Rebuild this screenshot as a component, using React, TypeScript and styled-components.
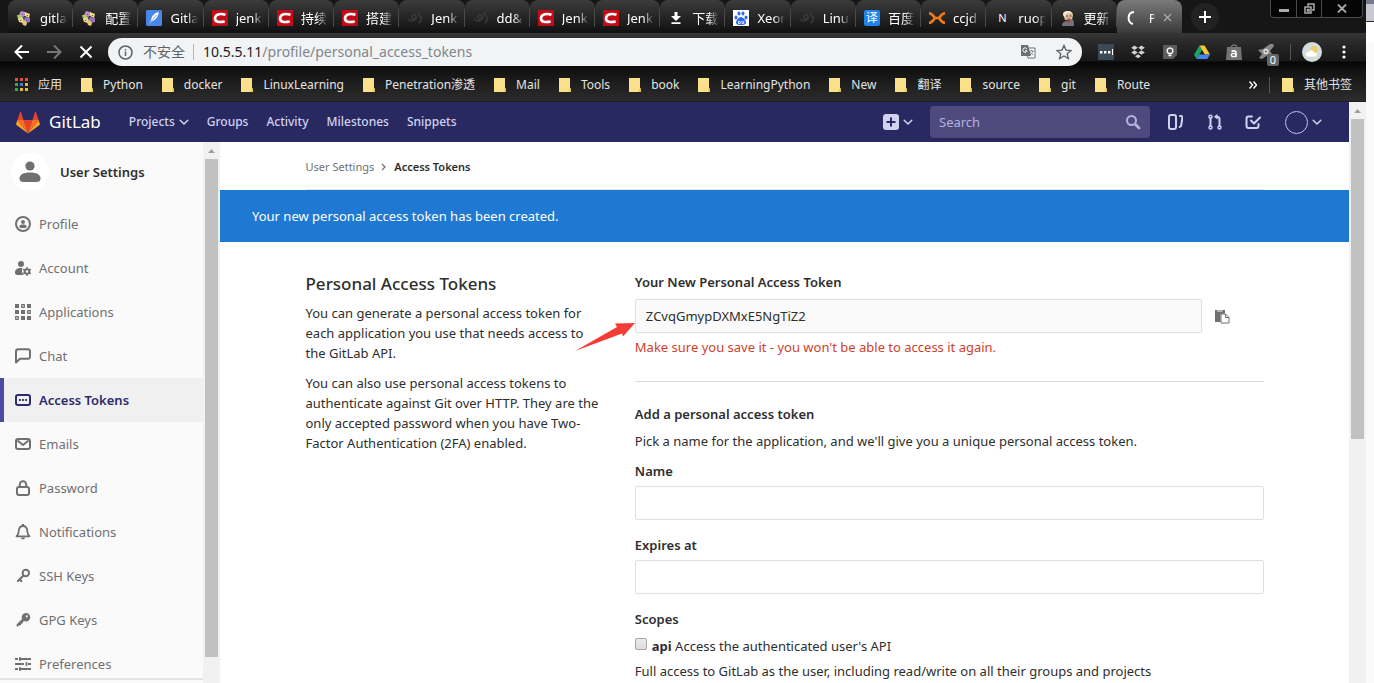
import React from "react";
import styled, { createGlobalStyle, css } from "styled-components";

const uiFont = `"Noto Sans", "Noto Sans CJK SC", sans-serif`;

const GlobalStyle = createGlobalStyle`
  *, *::before, *::after { box-sizing: border-box; }
  body { margin: 0; font-family: ${uiFont}; font-size: 13px; line-height: 20px; color: #2e2e2e; background: #fff; }
  h1, h2, h3, p, ul { margin: 0; padding: 0; }
  a { color: inherit; text-decoration: none; }
  button { border: 0; padding: 0; background: none; color: inherit; font: inherit; cursor: pointer; }
  input { font: inherit; color: inherit; }
  svg { display: block; flex: none; }
`;

/* ---------- desktop ---------- */

const Desktop = styled.div`
  display: flex;
  height: 100vh;
  overflow: hidden;
`;

const BrowserWindow = styled.div`
  flex: 1;
  min-width: 0;
  display: flex;
  flex-direction: column;
`;

const NeighbourWindow = styled.div`
  flex: none;
  width: 8px;
  background: linear-gradient(#77798a 0 4px, #c9c9d2 4px 21px, #2b2b30 21px 22px, #fff 22px 42px, #f9f9fa 42px);
`;

/* ---------- tab strip ---------- */

const TabBar = styled.div`
  display: flex;
  height: 33px;
  padding-left: 8px;
  background: #161616;
  color: #fff;
`;

const TabList = styled.div`
  flex: 1;
  min-width: 0;
  max-width: 1174px;
  display: grid;
  grid-auto-flow: column;
  grid-auto-columns: minmax(0, 1fr);
`;

const Tab = styled.button<{ $active?: boolean }>`
  position: relative;
  min-width: 0;
  display: flex;
  align-items: center;
  gap: 8px;
  padding: 2px ${(p) => (p.$active ? 10 : 6)}px 0 8px;
  font-size: 13px;
  border-radius: 8px 8px 0 0;
  background: ${(p) => (p.$active ? "linear-gradient(#7a7a7a, #3a3a3a)" : "linear-gradient(#3c3c3c, #101010)")};
  &::after {
    content: "";
    position: absolute;
    right: 0;
    top: 9px;
    width: 1px;
    height: 18px;
    background: ${(p) => (p.$active ? "transparent" : "#4a4a4a")};
  }
`;

const TabTitle = styled.span`
  flex: 1;
  min-width: 0;
  text-align: left;
  white-space: nowrap;
  mask-image: linear-gradient(90deg, #000 60%, transparent);
`;

const NewTab = styled.button`
  width: 28px;
  height: 28px;
  margin: 3px 0 0 9px;
  display: grid;
  place-items: center;
  border-radius: 14px;
  background: #222;
`;

const WindowControls = styled.div`
  display: flex;
  align-self: flex-start;
  margin: 0 3px 0 auto;
  height: 18px;
  border: 1px solid #4b4b4b;
  border-top: 0;
  border-radius: 0 0 4px 4px;
  background: #050505;
`;

const WindowButton = styled.button<{ $wide?: boolean }>`
  width: ${(p) => (p.$wide ? 41 : 25)}px;
  display: grid;
  place-items: center;
  & + & { border-left: 1px solid #4b4b4b; }
`;

/* ---------- toolbar ---------- */

const Toolbar = styled.div`
  display: flex;
  align-items: center;
  height: 37px;
  padding: 0 16px 0 14px;
  color: #fff;
  background: linear-gradient(#363636 0, #262626 12px, #181818 28px, #060606 29px, #121212);
`;

const ToolButton = styled.button<{ $dim?: boolean }>`
  width: 16px;
  height: 16px;
  margin-right: 16px;
  display: grid;
  place-items: center;
  color: ${(p) => (p.$dim ? "#777" : "#fff")};
`;

const Omnibox = styled.form`
  flex: 1;
  min-width: 0;
  display: flex;
  align-items: center;
  height: 28px;
  margin: 1px 16px 0 -2px;
  padding: 0 10px;
  border-radius: 14px;
  background: #f1f3f4;
  color: #5f6368;
  font-size: 14px;
`;

const Security = styled.span`
  margin: 0 9px 0 10px;
  padding-right: 8px;
  border-right: 1px solid #b5b7ba;
  line-height: 16px;
  white-space: nowrap;
`;

const Host = styled.label`
  color: #202124;
`;

const PathInput = styled.input`
  flex: 1;
  min-width: 0;
  padding: 0;
  border: 0;
  outline: 0;
  background: none;
  color: #80868b;
`;

const OmniboxActions = styled.div`
  display: flex;
  align-items: center;
  gap: 20px;
`;

const Extensions = styled.div`
  display: flex;
  align-items: center;
  gap: 16px;
`;

const Plain = styled.button`
  display: grid;
  place-items: center;
`;

const Badged = styled(Plain)`
  position: relative;
`;

const Badge = styled.span`
  position: absolute;
  left: 9px;
  top: 10px;
  width: 12px;
  height: 12px;
  border-radius: 2px;
  background: #666;
  font-size: 11px;
  line-height: 12px;
  text-align: center;
`;

const Divider = styled.span`
  width: 1px;
  height: 16px;
  background: #555;
`;

const AccountGroup = styled.div`
  display: flex;
  align-items: center;
  gap: 11px;
`;

/* ---------- bookmarks ---------- */

const BookmarkBar = styled.nav`
  display: flex;
  align-items: center;
  gap: 19px;
  height: 32px;
  padding: 0 14px 2px 15px;
  background: linear-gradient(#121212, #2c2c2c);
  border-bottom: 1px solid #1c1c26;
  color: #e3e3e3;
  font-size: 12px;
  white-space: nowrap;
`;

const Bookmark = styled.a`
  display: flex;
  align-items: center;
  gap: 10px;
`;

const BookmarkEnd = styled.div`
  display: flex;
  align-items: center;
  gap: 12px;
  margin-left: auto;
`;

/* ---------- GitLab header ---------- */

const Viewport = styled.div`
  flex: 1;
  min-height: 0;
  display: flex;
`;

const Page = styled.div`
  flex: 1;
  min-width: 0;
  display: flex;
  flex-direction: column;
`;

const Navbar = styled.header`
  flex: none;
  display: flex;
  align-items: center;
  height: 40px;
  padding: 0 27px 0 16px;
  background: #292961;
  color: #d1d1f0;
`;

const Brand = styled.a`
  display: flex;
  align-items: center;
  gap: 9px;
  margin-right: 28px;
  color: #fff;
  font-size: 17px;
`;

const NavLinks = styled.nav`
  display: flex;
  align-items: center;
  gap: 18px;
  font-size: 12px;
  font-weight: 500;
`;

const NavLink = styled.a`
  display: flex;
  align-items: center;
  gap: 4px;
`;

const NavRight = styled.div`
  display: flex;
  align-items: center;
  margin-left: auto;
`;

const NavButton = styled.button<{ $gap: number }>`
  display: flex;
  align-items: center;
  gap: 4px;
  margin-left: ${(p) => p.$gap}px;
`;

const SearchBox = styled.form`
  display: flex;
  align-items: center;
  width: 220px;
  height: 32px;
  margin-left: 17px;
  padding: 0 9px;
  border-radius: 4px;
  background: #4e4a7e;
  color: #b5b2dc;
`;

const SearchInput = styled.input`
  flex: 1;
  min-width: 0;
  padding: 0;
  border: 0;
  outline: 0;
  background: none;
  &::placeholder { color: #b5b2dc; opacity: 1; }
`;

const Avatar = styled.span`
  width: 23px;
  height: 23px;
  border: 1px solid #c3c2ea;
  border-radius: 50%;
`;

/* ---------- body ---------- */

const Body = styled.div`
  flex: 1;
  min-height: 0;
  display: flex;
`;

const Sidebar = styled.aside`
  flex: none;
  width: 203px;
  display: flex;
  flex-direction: column;
  background: #fafafa;
`;

const SidebarScroll = styled.div`
  flex: 1;
  min-height: 0;
  overflow: hidden;
`;

const SidebarFooter = styled.div`
  flex: none;
  height: 5px;
  border-top: 2px solid #e5e5e5;
`;

const ContextHeader = styled.a`
  display: flex;
  align-items: center;
  gap: 11px;
  height: 60px;
  padding-left: 11px;
  font-weight: 600;
`;

const ContextAvatar = styled.span`
  display: grid;
  place-items: center;
  width: 38px;
  height: 38px;
  border-radius: 50%;
  background: #fff;
  color: #707070;
`;

const SideLink = styled.a<{ $active?: boolean }>`
  display: flex;
  align-items: center;
  gap: 8px;
  height: 44px;
  padding-left: 15px;
  color: #707070;
  ${(p) =>
    p.$active &&
    css`
      background: #f0f0f0;
      box-shadow: inset 4px 0 0 #4b4ba3;
      color: #2f2a6b;
      font-weight: 600;
    `}
`;

const Track = styled.div`
  flex: none;
  display: flex;
  flex-direction: column;
  align-items: center;
  width: 17px;
  background: #f1f1f1;
`;

const TrackArrow = styled.svg`
  width: 17px;
  height: 17px;
  fill: #a0a0a0;
`;

const Thumb = styled.div<{ $size: string }>`
  width: 13px;
  height: ${(p) => p.$size};
  background: #c1c1c1;
`;

const Main = styled.main`
  flex: 1;
  min-width: 0;
  overflow: hidden;
`;

const Container = styled.div`
  max-width: 990px;
  margin: 0 auto;
  padding: 0 16px;
`;

const Breadcrumbs = styled.nav`
  display: flex;
  align-items: center;
  gap: 7px;
  height: 48px;
  padding-top: 2px;
  border-bottom: 1px solid #e5e5e5;
  font-size: 11px;
  color: #707070;
`;

const Current = styled.a`
  margin-left: 1px;
  font-weight: 600;
  color: #2e2e2e;
`;

const Flash = styled.div`
  padding: 16px 32px;
  background: #1f78d1;
  color: #fff;
`;

const Settings = styled.div`
  display: grid;
  grid-template-columns: 1fr 2fr;
  margin: 0 -15px;
  padding-top: 30px;
`;

const Column = styled.section`
  position: relative;
  padding: 0 15px;
`;

const PageTitle = styled.h1`
  margin-bottom: 7px;
  font-size: 17px;
  line-height: 24px;
  font-weight: 500;
`;

const Paragraph = styled.p`
  margin-bottom: 10px;
`;

const Heading = styled.h2`
  margin-bottom: 7px;
  font-size: 13px;
  line-height: 20px;
  font-weight: 600;
`;

const Label = styled.label`
  display: block;
  margin-bottom: 5px;
  font-weight: 600;
`;

const TokenLabel = styled(Label)`
  margin-bottom: 7px;
`;

const TextInput = styled.input`
  display: block;
  width: 100%;
  height: 34px;
  padding: 6px 10px;
  border: 1px solid #dfdfdf;
  border-radius: 2px;
  outline: 0;
  background: #fff;
  &:read-only { background: #fafafa; }
`;

const Field = styled.div`
  margin-bottom: 15px;
`;

const TokenRow = styled.div`
  display: flex;
  align-items: center;
`;

const CopyButton = styled.button`
  flex: none;
  width: 40px;
  height: 34px;
  margin-right: 22px;
  display: grid;
  place-items: center;
  color: #707070;
`;

const Warning = styled.p`
  margin-top: 4px;
  color: #cf3f2c;
`;

const Rule = styled.hr`
  height: 1px;
  margin: 24px 0 22px;
  border: 0;
  background: #dcdcdc;
`;

const CheckRow = styled.label`
  display: flex;
  align-items: center;
  gap: 5px;
  margin: 7px 0 5px;
`;

const Checkbox = styled.input`
  appearance: none;
  width: 12px;
  height: 12px;
  margin: 0 0 4px;
  border: 1px solid #a6a6a6;
  border-radius: 2px;
  background: linear-gradient(#ececec, #dcdcdc);
`;

const ArrowMark = styled.svg`
  position: absolute;
  left: -45px;
  top: 50px;
  width: 60px;
  height: 30px;
  fill: #f53b36;
`;

/* ---------- icons ---------- */

const Chevron = () => (
  <svg width="10" height="10" viewBox="0 0 10 10" fill="none" stroke="currentColor" strokeWidth="1.5" strokeLinecap="round" strokeLinejoin="round">
    <path d="M1.2 3.2 5 7l3.8-3.8" />
  </svg>
);

const Folder = () => (
  <svg width="12" height="14" viewBox="0 0 12 14">
    <path d="M0 0h11v10l1 1v3H0z" fill="#fbe08a" />
    <path d="M9.500 14 11 10l1 1v3z" fill="#f0c24c" />
  </svg>
);

const Jenkins = () => (
  <svg width="16" height="16" viewBox="0 0 16 16">
    <path d="m5 1 4 1 1 3-3 2-4-2z" fill="#c391cf" />
    <path d="m9 2 5 2-1 4-4-2z" fill="#f0dc7c" />
    <path d="m1 5 4 0 2 3-3 2-2-1z" fill="#a9cf5e" />
    <path d="m2 9 4-2 2 3-1 3-4-1z" fill="#ecd592" />
    <path d="m9 7 5 1 0 4-4 1-2-3z" fill="#9a74c2" />
    <path d="m6 12 3-2 2 3-1 3-3-1z" fill="#e2cc74" />
    <path d="M6 4h1v1H6zM7 7h2v2H7zM10 10h1v1h-1zM4 10h1v1H4zM11 5h1v1h-1z" fill="#5b4a86" />
  </svg>
);

const Feather = () => (
  <svg width="16" height="16" viewBox="0 0 16 16">
    <rect width="16" height="16" rx="1.500" fill="#4a85ea" />
    <path d="M13 2C8 3 5.500 6 5 10.500 4 12 3.700 13 3.500 14c1-2 2-2.600 3.500-3 3-1.500 5-4.500 6-9z" fill="#fff" />
    <path d="M4.500 12.500 10.500 5" stroke="#4a85ea" strokeWidth=".7" />
  </svg>
);

const Csdn = () => (
  <svg width="16" height="16" viewBox="0 0 16 16">
    <rect width="16" height="16" fill="#c20d19" />
    <path d="M13.500 4.800C9 3.200 3.500 3.700 3 8c-.3 4.300 4.500 4.500 9.700 3.500" fill="none" stroke="#fff" strokeWidth="2.600" />
  </svg>
);

const Swirl = () => (
  <svg width="16" height="16" viewBox="0 0 16 16" fill="none" stroke="#3b3b3b" strokeWidth="1.600">
    <path d="M1 9c3 3 8 2 8-2 0-3-4-3-4 0 0 2 3 3 5 1M12 2c-2 2 0 3 1 4 2 2 1 5-1 7" />
  </svg>
);

const Download = () => (
  <svg width="16" height="16" viewBox="0 0 16 16" fill="#fff">
    <path d="M6.500 2h3v4H13L8 11 3 6h3.500zM3.500 12.200h9V14h-9z" />
  </svg>
);

const Baidu = () => (
  <svg width="16" height="16" viewBox="0 0 16 16">
    <rect width="16" height="16" fill="#fff" />
    <g fill="#2d6bea">
      <ellipse cx="3" cy="7.500" rx="1.500" ry="2" />
      <ellipse cx="6" cy="3.500" rx="1.500" ry="2.100" />
      <ellipse cx="10" cy="3.500" rx="1.500" ry="2.100" />
      <ellipse cx="13" cy="7.500" rx="1.500" ry="2" />
      <path d="M8 7c2.200 0 5 3.500 5 5.500S11 15 8 15s-5-.5-5-2.500S5.800 7 8 7z" />
    </g>
    <path d="M5.500 11.500h1.700v2H5.500zM9 11v2.500h1.700V11" fill="none" stroke="#fff" strokeWidth=".8" />
  </svg>
);

const TranslateGlyph = styled.span`
  flex: none;
  width: 16px;
  height: 16px;
  border-radius: 2px;
  background: #1f85e8;
  font-size: 12px;
  line-height: 16px;
  text-align: center;
`;

const LetterGlyph = styled.span`
  flex: none;
  width: 16px;
  font-size: 11px;
  text-align: center;
`;

const Crossed = () => (
  <svg width="16" height="16" viewBox="0 0 16 16" fill="none" stroke="#ee7b1c" strokeWidth="2.600">
    <path d="M0 3.200c3 0 4 2.300 6 4.800-2 2.500-3 4.800-6 4.800M16 3.200c-3 0-4 2.300-6 4.800 2 2.500 3 4.800 6 4.800M5.500 8h5" />
  </svg>
);

const Portrait = () => (
  <svg width="16" height="16" viewBox="0 0 16 16">
    <path d="M3 4c0-4 10-4 10 1l-1 5H5z" fill="#d9bd9a" />
    <path d="M3 5c0-5 8-5 9-2L7 3.500 5 7z" fill="#efe6d5" />
    <path d="M2 16c0-4 3-5 5-5l5-2c2 1 2 4 2 7z" fill="#71727c" />
    <path d="m6 11 3 2 2-4" fill="#b33" />
    <path d="M6 6h2M9.500 6h2M7 9h3" stroke="#6b4a35" />
  </svg>
);

const Spinner = () => (
  <svg width="16" height="16" viewBox="0 0 16 16" fill="none" stroke="#fff" strokeWidth="2">
    <path d="M9 2C2 2.500 2 12.500 8 14" />
  </svg>
);

const CloseSmall = () => (
  <svg width="9" height="9" viewBox="0 0 9 9" stroke="#aaa" strokeWidth="1.300">
    <path d="m1 1 7 7M8 1 1 8" />
  </svg>
);

const Tanuki = () => (
  <svg width="24" height="23" viewBox="0 0 24 23">
    <path d="M12 22.500 16.400 9H7.600z" fill="#e24329" />
    <path d="M12 22.500 7.600 9H1.400z" fill="#fc6d26" />
    <path d="M1.400 9 .1 13.100c-.1.400 0 .8.300 1L12 22.500z" fill="#fca326" />
    <path d="M1.400 9h6.200L4.900.8c-.1-.4-.7-.4-.8 0z" fill="#e24329" />
    <path d="M12 22.500 16.400 9h6.200z" fill="#fc6d26" />
    <path d="m22.600 9 1.300 4.100c.1.400 0 .8-.3 1L12 22.500z" fill="#fca326" />
    <path d="M22.600 9h-6.200L19.100.8c.1-.4.7-.4.8 0z" fill="#e24329" />
  </svg>
);

type IconProps = { children: React.ReactNode; size?: number };
const LineIcon = ({ children, size = 16 }: IconProps) => (
  <svg width={size} height={size} viewBox="0 0 16 16" fill="none" stroke="currentColor" strokeWidth="2" strokeLinejoin="round" strokeLinecap="round">
    {children}
  </svg>
);
const solid = { fill: "currentColor", stroke: "none" };

const sideIcons: Record<string, React.ReactNode> = {
  Profile: (
    <LineIcon>
      <circle cx="8" cy="8" r="7" />
      <circle cx="8" cy="6" r="2" {...solid} />
      <path d="M4.200 10.500c.5-1.400 2-2 3.800-2s3.300.6 3.800 2c.2 1-1.600 1.500-3.800 1.500s-4-.5-3.800-1.500z" {...solid} />
    </LineIcon>
  ),
  Account: (
    <LineIcon>
      <circle cx="6" cy="4" r="3" {...solid} />
      <path d="M0 12.500C0 9.700 2.500 8 5 8h2.500C6.500 10 7 13 8.500 15H2c-1.300 0-2-1-2-2.500z" {...solid} />
      <circle cx="12" cy="11.500" r="2.300" />
      <path d="M12 7.800v1M12 14.200v1M8.800 9.700l.9.500M14.300 12.800l.9.500M8.800 13.300l.9-.5M14.300 10.200l.9-.5" strokeWidth="1.600" />
    </LineIcon>
  ),
  Applications: (
    <LineIcon>
      <path d="M0 0h4v4H0zM12 0h4v4h-4zM0 6h4v4H0zM6 6h4v4H6zM6 12h4v4H6zM12 12h4v4h-4z" {...solid} />
      <path d="M6.700.7h2.600v2.600H6.700zM12.700 6.700h2.600v2.600h-2.600zM.7 12.700h2.600v2.600H.7z" strokeWidth="1.300" />
    </LineIcon>
  ),
  Chat: (
    <LineIcon>
      <path d="M1 14.500V3.500C1 2 2 1.200 3.200 1.200h9.600C14.200 1.200 15 2 15 3.400v5.200c0 1.400-.8 2.200-2.200 2.200H5z" />
    </LineIcon>
  ),
  "Access Tokens": (
    <LineIcon>
      <rect x="1" y="3" width="14" height="10" rx="2" />
      <path d="M4 7h1.800v2H4zM7.100 7h1.800v2H7.100zM10.200 7H12v2h-1.800z" {...solid} />
    </LineIcon>
  ),
  Emails: (
    <LineIcon>
      <rect x="1" y="3" width="14" height="10" rx="2" />
      <path d="m3 5 5 4 5-4" />
    </LineIcon>
  ),
  Password: (
    <LineIcon>
      <rect x="2" y="7" width="12" height="8" rx="2" />
      <path d="M4.800 7V4.500a3.200 3.200 0 0 1 6.400 0V7" />
    </LineIcon>
  ),
  Notifications: (
    <LineIcon>
      <path d="M1.500 12.300c2-1.500 2-3.300 2.200-5.300C4 3.800 5.500 2 8 2s4 1.800 4.300 5c.2 2 .2 3.800 2.200 5.300z" strokeWidth="1.800" />
      <path d="M6 13.500h4c0 1.300-.9 2-2 2s-2-.7-2-2zM7 0h2v2H7z" {...solid} />
    </LineIcon>
  ),
  "SSH Keys": (
    <LineIcon>
      <circle cx="10.800" cy="5" r="3.200" />
      <path d="M8.500 7.500 3 13M4.800 11.500l1.500 1.500" strokeWidth="2.200" />
    </LineIcon>
  ),
  "GPG Keys": (
    <LineIcon>
      <path d="M11 1a4.200 4.200 0 0 1 0 8.400c-1 0-1.400-.2-2-.4L7.500 10.500v1.300H6v1.400H4.500L3 14.600H1.600v-2.200L7 7C6 3.800 8.200 1 11 1z" {...solid} />
      <circle cx="11.800" cy="4.300" r="1.100" fill="#fafafa" stroke="none" />
    </LineIcon>
  ),
  Preferences: (
    <LineIcon>
      <path d="M0 2h3v2H0zM5 2h11v2H5zM0 7h9v2H0zM13 7h3v2h-3zM0 12h3v2H0zM5 12h11v2H5z" {...solid} />
      <path d="M4 1.200h2v3.600H4zM10.500 6.200h2v3.600h-2zM4 11.200h2v3.600H4z" {...solid} />
    </LineIcon>
  ),
};

/* ---------- data ---------- */

const tabs: [React.ReactNode, string][] = [
  [<Jenkins />, "gitla"],
  [<Jenkins />, "配置"],
  [<Feather />, "Gitla"],
  [<Csdn />, "jenki"],
  [<Csdn />, "持续"],
  [<Csdn />, "搭建"],
  [<Swirl />, "Jenk"],
  [<Swirl />, "dd&"],
  [<Csdn />, "Jenk"],
  [<Csdn />, "Jenk"],
  [<Download />, "下载"],
  [<Baidu />, "Xeor"],
  [<Swirl />, "Linu"],
  [<TranslateGlyph>译</TranslateGlyph>, "百度"],
  [<Crossed />, "ccjd"],
  [<LetterGlyph>N</LetterGlyph>, "ruop"],
  [<Portrait />, "更新"],
];

const bookmarks = ["Python", "docker", "LinuxLearning", "Penetration渗透", "Mail", "Tools", "book", "LearningPython", "New", "翻译", "source", "git", "Route"];

const appColors = ["#e0533d", "#e0533d", "#e0533d", "#35a853", "#3f7de0", "#e9b93a", "#35a853", "#e9b93a", "#e9b93a"];

const UpArrow = () => (
  <TrackArrow viewBox="0 0 17 17">
    <path d="m5 11 3.500-4 3.500 4z" />
  </TrackArrow>
);

const BrowserTabs = () => (
  <TabBar>
    <TabList>
      {tabs.map(([icon, title], i) => (
        <Tab key={i}>
          {icon}
          <TabTitle>{title}</TabTitle>
        </Tab>
      ))}
      <Tab $active>
        <Spinner />
        <TabTitle>P</TabTitle>
        <CloseSmall />
      </Tab>
    </TabList>
    <NewTab aria-label="New tab">
      <svg width="12" height="12" viewBox="0 0 12 12" stroke="#fff" strokeWidth="2"><path d="M6 0v12M0 6h12" /></svg>
    </NewTab>
    <WindowControls>
      <WindowButton aria-label="Minimize">
        <svg width="10" height="8" viewBox="0 0 10 8"><path d="M0 4h10v3H0z" fill="#aaa" /></svg>
      </WindowButton>
      <WindowButton aria-label="Restore">
        <svg width="11" height="11" viewBox="0 0 11 11" fill="none" stroke="#aaa" strokeWidth="1.500"><path d="M4 3V1h6v6H8M1 4h6v6H1zM3.500 6.500h1.500v1.500H3.500z" /></svg>
      </WindowButton>
      <WindowButton $wide aria-label="Close">
        <svg width="10" height="9" viewBox="0 0 10 9" stroke="#aaa" strokeWidth="1.800"><path d="m1 .5 8 8M9 .5l-8 8" /></svg>
      </WindowButton>
    </WindowControls>
  </TabBar>
);

const BrowserToolbar = () => (
  <Toolbar>
    <ToolButton aria-label="Back">
      <svg width="16" height="16" viewBox="0 0 16 16" fill="none" stroke="currentColor" strokeWidth="2"><path d="M15 8H2M8 1.500 1.500 8 8 14.500" /></svg>
    </ToolButton>
    <ToolButton $dim aria-label="Forward">
      <svg width="16" height="16" viewBox="0 0 16 16" fill="none" stroke="currentColor" strokeWidth="2"><path d="M1 8h13M8 1.500 14.500 8 8 14.500" /></svg>
    </ToolButton>
    <ToolButton aria-label="Stop">
      <svg width="14" height="14" viewBox="0 0 14 14" stroke="currentColor" strokeWidth="2"><path d="m1.500 1.500 11 11M12.500 1.500l-11 11" /></svg>
    </ToolButton>
    <Omnibox>
      <svg width="15" height="15" viewBox="0 0 15 15" fill="none" stroke="currentColor" strokeWidth="1.500"><circle cx="7.500" cy="7.500" r="6.500" /><path d="M7.500 6.500v4.500M7.500 4v1.500" /></svg>
      <Security>不安全</Security>
      <Host htmlFor="address">10.5.5.11</Host>
      <PathInput id="address" defaultValue="/profile/personal_access_tokens" />
      <OmniboxActions>
        <Plain type="button" aria-label="Translate">
          <svg width="16" height="16" viewBox="0 0 16 16">
            <path d="M6 4h9v10H8z" fill="#fff" stroke="#6b6f73" />
            <path d="M1 1h7l3 11H1z" fill="#6b6f73" />
            <path d="M6.800 4.800a2.200 2.200 0 1 0 .3 2H5" fill="none" stroke="#fff" />
            <path d="M9.500 7h4.500M11.700 6v1M13 7c-.5 2-1.500 3-3 4M10.500 8.500c.8 1.200 1.700 2 3 2.500" fill="none" stroke="#6b6f73" strokeWidth=".8" />
          </svg>
        </Plain>
        <Plain type="button" aria-label="Bookmark">
          <svg width="16" height="16" viewBox="0 0 16 16" fill="none" stroke="currentColor" strokeWidth="1.400"><path d="m8 1.500 2 4.600 4.900.4-3.700 3.200 1.100 4.800L8 12l-4.300 2.500 1.100-4.800L1.100 6.500 6 6.100z" /></svg>
        </Plain>
      </OmniboxActions>
    </Omnibox>
    <Extensions>
      <Plain aria-label="Password manager">
        <svg width="16" height="16" viewBox="0 0 16 16"><path d="M0 0h16v16H0z" fill="#3c4a55" /><path d="M2 7h2.400v2.400H2zM6 7h2.400v2.400H6zM10 7h2.400v2.400H10zM14 5h1v6h-1z" fill="#fff" /></svg>
      </Plain>
      <Plain aria-label="Dropbox">
        <svg width="16" height="16" viewBox="0 0 16 16" fill="#d0d0d0"><path d="m4.500 1.500 3.300 2.200-3.300 2.200-3.300-2.200zM11.500 1.500l3.300 2.200-3.300 2.200-3.300-2.200zM4.500 6.300l3.300 2.200-3.300 2.200-3.300-2.200zM11.500 6.300l3.300 2.200-3.300 2.200-3.300-2.200zM8 10.200l3 2-3 2.100-3-2.100z" /></svg>
      </Plain>
      <Plain aria-label="Keep">
        <svg width="16" height="16" viewBox="0 0 16 16"><path d="M1 1h14v10l-4 4H1z" fill="#5c5c5c" /><path d="M6.500 9.500C4 7.500 5 4 8 4s4 3.500 1.500 5.500zM6.500 11.500h3" fill="none" stroke="#fff" strokeWidth="1.400" /></svg>
      </Plain>
      <Plain aria-label="Drive">
        <svg width="16" height="16" viewBox="0 0 16 16"><path d="M5.500 1.500 0 10.800 2.700 15 8 6z" fill="#1ea362" /><path d="M5.500 1.500h5L16 10.500h-5.200z" fill="#fcc934" /><path d="M5.300 10.500H16L13.300 15H2.700z" fill="#4285f4" /></svg>
      </Plain>
      <Plain aria-label="Shopping">
        <svg width="16" height="16" viewBox="0 0 16 16"><path d="M1 3h14l1 13H0z" fill="#747474" /><path d="M5 4c0-4 6-4 6 0" fill="none" stroke="#747474" strokeWidth="1.300" /><path d="M5.500 7.500c1.500-1 4.500-1 4.500 1V13" fill="none" stroke="#fff" strokeWidth="1.600" /><ellipse cx="7.600" cy="11" rx="2.200" ry="1.600" fill="none" stroke="#fff" strokeWidth="1.400" /></svg>
      </Plain>
      <Badged aria-label="Notifications">
        <svg width="16" height="16" viewBox="0 0 16 16"><path d="M12 0h3l1 2-4 5 2 3-4 1-6 4-3-1 3-4-4-4 5-1z" fill="#888" /><circle cx="8" cy="7.500" r="2" fill="none" stroke="#e4e4e4" strokeWidth="1.300" /></svg>
        <Badge>0</Badge>
      </Badged>
      <AccountGroup>
        <Divider />
        <Plain aria-label="Account">
          <svg width="20" height="20" viewBox="0 0 20 20"><circle cx="10" cy="10" r="10" fill="#d5dcdd" /><circle cx="12" cy="7.500" r="3.500" fill="#f1ca62" /><path d="M4 13.500c-1-3 2-4 3-3.500 1-3 5-2 5 .5 3-.5 4 3 1.500 4H6c-1 0-1.500-.5-2-1z" fill="#fff" /></svg>
        </Plain>
      </AccountGroup>
      <Plain aria-label="Menu">
        <svg width="12" height="16" viewBox="0 0 12 16" fill="#fff"><circle cx="6" cy="3" r="1.600" /><circle cx="6" cy="8" r="1.600" /><circle cx="6" cy="13" r="1.600" /></svg>
      </Plain>
    </Extensions>
  </Toolbar>
);

const Bookmarks = () => (
  <BookmarkBar>
    <Bookmark href="#">
      <svg width="13" height="13" viewBox="0 0 13 13">
        {appColors.map((c, i) => (
          <rect key={i} x={(i % 3) * 5} y={Math.floor(i / 3) * 5} width="3" height="3" fill={c} />
        ))}
      </svg>
      应用
    </Bookmark>
    {bookmarks.map((name) => (
      <Bookmark key={name} href="#">
        <Folder />
        {name}
      </Bookmark>
    ))}
    <BookmarkEnd>
      <svg width="8" height="8" viewBox="0 0 8 8" fill="none" stroke="#fff" strokeWidth="1.400"><path d="m.5.500 3 3.500-3 3.500M4.500.5l3 3.500-3 3.500" /></svg>
      <Divider />
      <Bookmark href="#">
        <Folder />
        其他书签
      </Bookmark>
    </BookmarkEnd>
  </BookmarkBar>
);

const Header = () => (
  <Navbar>
    <Brand href="#">
      <Tanuki />
      GitLab
    </Brand>
    <NavLinks>
      <NavLink href="#">Projects <Chevron /></NavLink>
      <NavLink href="#">Groups</NavLink>
      <NavLink href="#">Activity</NavLink>
      <NavLink href="#">Milestones</NavLink>
      <NavLink href="#">Snippets</NavLink>
    </NavLinks>
    <NavRight>
      <NavButton $gap={0} aria-label="New">
        <svg width="16" height="16" viewBox="0 0 16 16"><rect width="16" height="16" rx="3" fill="currentColor" /><path d="M8 3.500v9M3.500 8h9" stroke="#292961" strokeWidth="2" /></svg>
        <Chevron />
      </NavButton>
      <SearchBox>
        <SearchInput placeholder="Search" aria-label="Search" />
        <LineIcon><circle cx="6.500" cy="6.500" r="4.500" /><path d="m10.500 10.500 3.500 3.500" strokeWidth="2.800" /></LineIcon>
      </SearchBox>
      <NavButton $gap={17} aria-label="Issues">
        <LineIcon><rect x="2" y="1" width="7" height="14" rx="2" /><path d="M13 2h1c1 0 1.500.8 1.300 2l-1 7c-.2 1.300-.8 2-1.600 2" /></LineIcon>
      </NavButton>
      <NavButton $gap={24} aria-label="Merge requests">
        <LineIcon>
          <g strokeWidth="1.500">
            <circle cx="3.500" cy="2.800" r="1.500" /><circle cx="3.500" cy="13.500" r="1.500" /><circle cx="12.500" cy="13.500" r="1.500" /><path d="M3.500 4.500V12M12.500 12V5c0-1.500-1-2.200-3-2.200" strokeWidth="2" />
          </g>
          <path d="M10.500 0v5.600L6.800 2.800z" {...solid} />
        </LineIcon>
      </NavButton>
      <NavButton $gap={22} aria-label="Todos">
        <LineIcon><path d="M7 2.500H3.500C2 2.500 1.500 3 1.500 4.500v7c0 1.500.5 2.500 2 2.500h8c1.500 0 2-1 2-2.500V10M6 6.500 9 9.500 15 3.500" /></LineIcon>
      </NavButton>
      <NavButton $gap={24} aria-label="Profile menu">
        <Avatar />
        <Chevron />
      </NavButton>
    </NavRight>
  </Navbar>
);

const SettingsNav = () => (
  <Sidebar>
    <SidebarScroll>
      <ContextHeader href="#">
        <ContextAvatar>
          <svg width="24" height="24" viewBox="0 0 24 24" fill="currentColor"><circle cx="12" cy="6" r="4.600" /><path d="M1.500 18.500C1.500 14.500 5.500 12.500 12 12.500s10.500 2 10.500 6c0 2.500-1.500 3.500-4 3.500h-13c-2.500 0-4-1-4-3.500z" /></svg>
        </ContextAvatar>
        User Settings
      </ContextHeader>
      <nav>
        {Object.keys(sideIcons).map((name) => (
          <SideLink key={name} href="#" $active={name === "Access Tokens"}>
            {sideIcons[name]}
            {name}
          </SideLink>
        ))}
      </nav>
    </SidebarScroll>
    <SidebarFooter />
  </Sidebar>
);

const TokenPage = () => (
  <Main>
    <Container>
      <Breadcrumbs>
        <a href="#">User Settings</a>
        <svg width="5" height="8" viewBox="0 0 5 8" fill="none" stroke="#707070" strokeWidth="1.200"><path d="m1 1 3 3-3 3" /></svg>
        <Current href="#">Access Tokens</Current>
      </Breadcrumbs>
    </Container>
    <Flash role="status">Your new personal access token has been created.</Flash>
    <Container>
      <Settings>
        <Column>
          <PageTitle>Personal Access Tokens</PageTitle>
          <Paragraph>You can generate a personal access token for each application you use that needs access to the GitLab API.</Paragraph>
          <Paragraph>You can also use personal access tokens to authenticate against Git over HTTP. They are the only accepted password when you have Two-Factor Authentication (2FA) enabled.</Paragraph>
        </Column>
        <Column>
          <TokenLabel htmlFor="token">Your New Personal Access Token</TokenLabel>
          <TokenRow>
            <TextInput id="token" readOnly value="ZCvqGmypDXMxE5NgTiZ2" />
            <CopyButton aria-label="Copy token">
              <svg width="16" height="16" viewBox="0 0 16 16">
                <path d="M1 2h10v3.500L6.500 6v8H1z" fill="currentColor" />
                <path d="M3 3h5.500" stroke="#fff" />
                <path d="M7 6h4.500L15 9.500V15H7z" fill="#fff" stroke="currentColor" />
                <path d="M11.500 6v3.500H15" fill="none" stroke="currentColor" />
              </svg>
            </CopyButton>
          </TokenRow>
          <Warning>Make sure you save it - you won't be able to access it again.</Warning>
          <ArrowMark viewBox="0 0 60 30">
            <path d="M0 29 42 5l-2-3.500L60 1 48 14.500l-1-3z" />
          </ArrowMark>
          <Rule />
          <Heading>Add a personal access token</Heading>
          <Paragraph>Pick a name for the application, and we'll give you a unique personal access token.</Paragraph>
          <Field>
            <Label htmlFor="name">Name</Label>
            <TextInput id="name" />
          </Field>
          <Field>
            <Label htmlFor="expires">Expires at</Label>
            <TextInput id="expires" />
          </Field>
          <Heading as="h3">Scopes</Heading>
          <CheckRow>
            <Checkbox type="checkbox" />
            <span><b>api</b> Access the authenticated user's API</span>
          </CheckRow>
          <Paragraph>Full access to GitLab as the user, including read/write on all their groups and projects</Paragraph>
        </Column>
      </Settings>
    </Container>
  </Main>
);

export default function App() {
  return (
    <Desktop>
      <GlobalStyle />
      <BrowserWindow>
        <BrowserTabs />
        <BrowserToolbar />
        <Bookmarks />
        <Viewport>
          <Page>
            <Header />
            <Body>
              <SettingsNav />
              <Track>
                <UpArrow />
                <Thumb $size="92%" />
              </Track>
              <TokenPage />
            </Body>
          </Page>
          <Track>
            <UpArrow />
            <Thumb $size="55%" />
          </Track>
        </Viewport>
      </BrowserWindow>
      <NeighbourWindow />
    </Desktop>
  );
}
